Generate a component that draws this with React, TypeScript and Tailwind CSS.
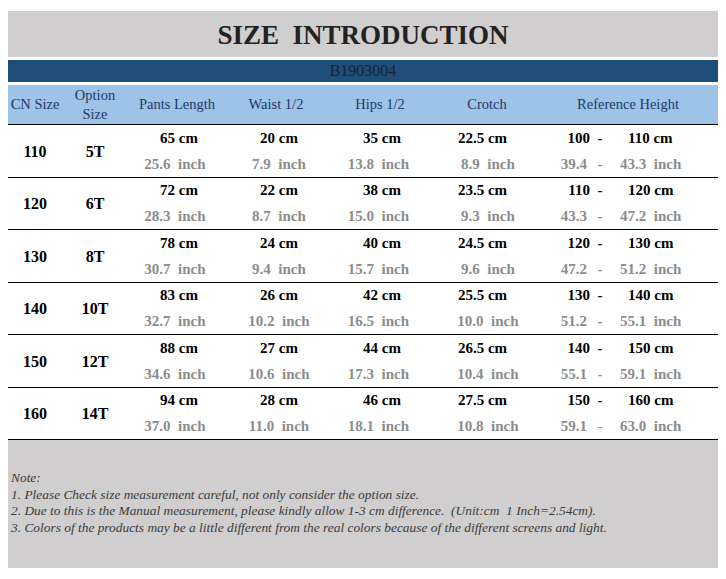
const rows = [
  { cn: "110", opt: "5T", v: [["65", "25.6"], ["20", "7.9"], ["35", "13.8"], ["22.5", "8.9"]], h: ["100", "110", "39.4", "43.3"] },
  { cn: "120", opt: "6T", v: [["72", "28.3"], ["22", "8.7"], ["38", "15.0"], ["23.5", "9.3"]], h: ["110", "120", "43.3", "47.2"] },
  { cn: "130", opt: "8T", v: [["78", "30.7"], ["24", "9.4"], ["40", "15.7"], ["24.5", "9.6"]], h: ["120", "130", "47.2", "51.2"] },
  { cn: "140", opt: "10T", v: [["83", "32.7"], ["26", "10.2"], ["42", "16.5"], ["25.5", "10.0"]], h: ["130", "140", "51.2", "55.1"] },
  { cn: "150", opt: "12T", v: [["88", "34.6"], ["27", "10.6"], ["44", "17.3"], ["26.5", "10.4"]], h: ["140", "150", "55.1", "59.1"] },
  { cn: "160", opt: "14T", v: [["94", "37.0"], ["28", "11.0"], ["46", "18.1"], ["27.5", "10.8"]], h: ["150", "160", "59.1", "63.0"] },
];

// column widths and small per-column nudges for the cm / inch lines
const cols = [
  { w: "w-[102px]", cm: "", inch: "pr-[8px]" },
  { w: "w-[98px]", cm: "", inch: "" },
  { w: "w-[108px]", cm: "", inch: "pr-[7px]" },
  { w: "w-[102px]", cm: "pr-[9px]", inch: "pl-[2px]" },
];

function App() {
  return (
    <div className="w-[726px] h-[579px] bg-white pt-[11px] px-[8px] font-['Liberation_Serif','Times_New_Roman',serif]">
      <div className="h-[46px] bg-[#d0cece] flex items-center justify-center">
        <span className="text-[27px] font-bold text-[#222] whitespace-pre leading-none pt-[2px]">SIZE  INTRODUCTION</span>
      </div>
      <div className="mt-[3px] h-[22px] bg-[#1f4e78] flex items-center justify-center">
        <span className="text-[16px] text-[#1a2433] leading-none">B1903004</span>
      </div>
      <div className="mt-[3px] h-[40px] bg-[#9dc3e6] flex items-center text-[14.5px] text-[#1f3864] border-b border-black">
        <div className="w-[54px] text-center">CN Size</div>
        <div className="w-[66px] text-center leading-[19px]">Option<br />Size</div>
        <div className="w-[102px] text-center pr-[4px]">Pants Length</div>
        <div className="w-[98px] text-center pr-[6px]">Waist 1/2</div>
        <div className="w-[108px] text-center pr-[4px]">Hips 1/2</div>
        <div className="w-[102px] text-center">Crotch</div>
        <div className="w-[180px] text-center">Reference Height</div>
      </div>
      {rows.map((r) => (
        <div key={r.cn} className="h-[52.5px] flex items-center border-b border-black font-bold text-[15px]">
          <div className="w-[54px] text-center text-[16px] pt-[2px]">{r.cn}</div>
          <div className="w-[66px] text-center text-[16px] pt-[2px]">{r.opt}</div>
          {r.v.map((p, i) => (
            <div key={i} className={`${cols[i].w} flex flex-col`}>
              <div className={`h-[26px] flex items-center justify-center text-black ${cols[i].cm}`}>{p[0]} cm</div>
              <div className={`h-[26px] flex items-center justify-center text-[#8c8c8c] whitespace-pre ${cols[i].inch}`}>{p[1] + "  inch"}</div>
            </div>
          ))}
          <div className="w-[180px] flex flex-col">
            <div className="h-[26px] flex items-center text-black">
              <span className="w-[52px] text-right">{r.h[0]}</span>
              <span className="w-[20px] text-center">-</span>
              <span className="pl-[18px]">{r.h[1]} cm</span>
            </div>
            <div className="h-[26px] flex items-center text-[#8c8c8c] whitespace-pre">
              <span className="w-[52px] text-right pr-[3px]">{r.h[2]}</span>
              <span className="w-[20px] text-center">-</span>
              <span className="pl-[10px]">{r.h[3] + "  inch"}</span>
            </div>
          </div>
        </div>
      ))}
      <div className="h-[128px] bg-[#d0cece] pt-[30px] pl-[3px] italic text-[13.4px] leading-[16.7px] text-[#3a3a3a]">
        <div>Note:</div>
        <div>1. Please Check size measurement careful, not only consider the option size.</div>
        <div className="whitespace-pre">2. Due to this is the Manual measurement, please kindly allow 1-3 cm difference.  (Unit:cm  1 Inch=2.54cm).</div>
        <div>3. Colors of the products may be a little different from the real colors because of the different screens and light.</div>
      </div>
    </div>
  );
}

export default App;
